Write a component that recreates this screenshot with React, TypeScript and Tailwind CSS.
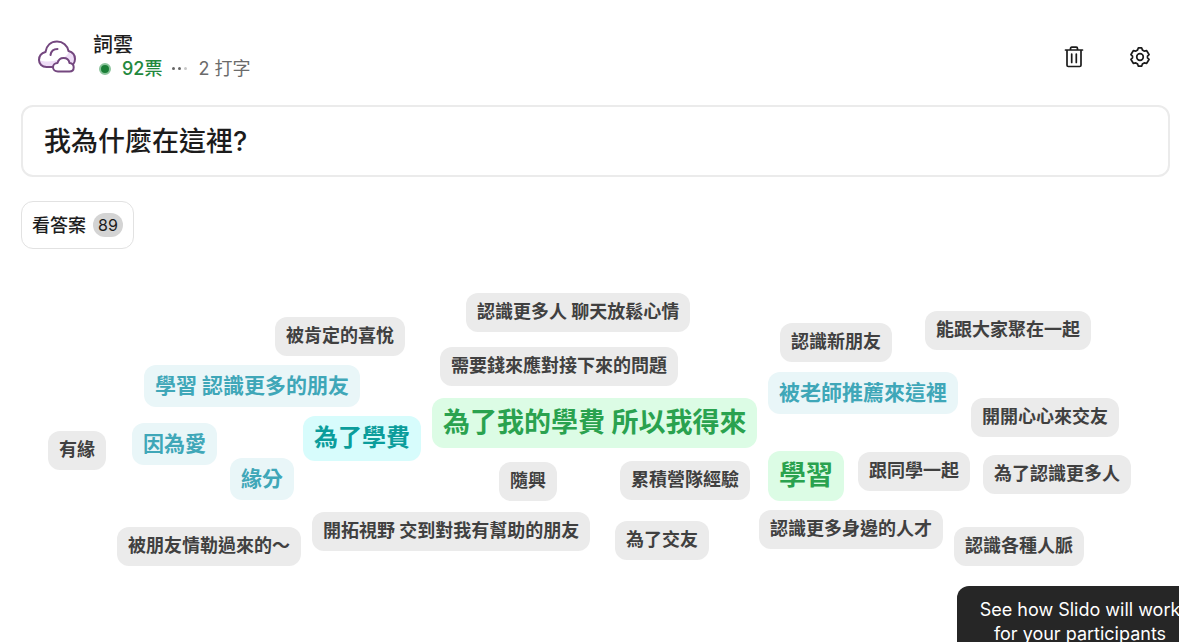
const FONT = "font-['Inter','Noto_Sans_CJK_TC',sans-serif]";

type Tone = "gray" | "sky" | "cyan" | "green";

const TONES: Record<Tone, string> = {
  gray: "bg-[#ebebeb] text-[#404040] text-[18px] leading-[38px] pb-px",
  sky: "bg-[#e9f6f8] text-[#3fa7b8] text-[21px] leading-[42px]",
  cyan: "bg-[#d7fcfc] text-[#0b9d9b] text-[24px] leading-[44px] pb-px",
  green: "bg-[#dcfce5] text-[#2aa24f] text-[27px] leading-[50px]",
};

const WORDS: { text: string; x: number; y: number; tone: Tone }[] = [
  { text: "認識更多人 聊天放鬆心情", x: 445, y: 20, tone: "gray" },
  { text: "能跟大家聚在一起", x: 904, y: 38, tone: "gray" },
  { text: "被肯定的喜悅", x: 254, y: 44, tone: "gray" },
  { text: "認識新朋友", x: 759, y: 50, tone: "gray" },
  { text: "需要錢來應對接下來的問題", x: 419, y: 74, tone: "gray" },
  { text: "學習 認識更多的朋友", x: 123, y: 92, tone: "sky" },
  { text: "被老師推薦來這裡", x: 747, y: 99, tone: "sky" },
  { text: "為了我的學費 所以我得來", x: 411, y: 125, tone: "green" },
  { text: "開開心心來交友", x: 950, y: 125, tone: "gray" },
  { text: "為了學費", x: 282, y: 143, tone: "cyan" },
  { text: "因為愛", x: 111, y: 150, tone: "sky" },
  { text: "有緣", x: 27, y: 158, tone: "gray" },
  { text: "學習", x: 747, y: 178, tone: "green" },
  { text: "跟同學一起", x: 837, y: 179, tone: "gray" },
  { text: "為了認識更多人", x: 962, y: 182, tone: "gray" },
  { text: "緣分", x: 209, y: 185, tone: "sky" },
  { text: "累積營隊經驗", x: 599, y: 188, tone: "gray" },
  { text: "隨興", x: 478, y: 189, tone: "gray" },
  { text: "認識更多身邊的人才", x: 738, y: 237, tone: "gray" },
  { text: "開拓視野 交到對我有幫助的朋友", x: 291, y: 239, tone: "gray" },
  { text: "為了交友", x: 594, y: 248, tone: "gray" },
  { text: "被朋友情勒過來的～", x: 96, y: 254, tone: "gray" },
  { text: "認識各種人脈", x: 933, y: 254, tone: "gray" },
];

function CloudIcon() {
  return (
    <svg width="40" height="34" viewBox="0 0 40 34" fill="none" stroke="#74477f" strokeWidth="2" strokeLinecap="round" strokeLinejoin="round" aria-hidden="true">
      <path d="M2 20c6 3 25 2 30-8 4 1 6 4 6 8 0 3-1 5-2 6L16 27H9c-4 0-7-4-7-7Z" fill="#eedcf6" stroke="none" />
      <path d="M15.500 27H9.500C5 27 2 24 2 20c0-4 2.500-7 6.500-8C9.500 5.500 14 1.500 20 1.500c6 0 10.500 4 11.500 9.500 4 1 6.500 4 6.500 8 0 2-.8 4.200-2 5.500" />
      <path d="M13.500 15c.5-3.500 3-6 7-6" />
      <path d="M21 31.500c-3 0-5-1.800-5-4.200s2-4.300 4.500-4.300c.8-3 3-5 6-5 3.200 0 5.500 2.200 6 5 2.500.3 4.200 2 4.200 4.300 0 2.400-1.700 4.200-4.200 4.200Z" fill="#fff" />
    </svg>
  );
}

function TrashIcon() {
  return (
    <svg width="24" height="24" viewBox="0 0 24 24" fill="none" stroke="#1c1c1c" strokeWidth="1.700" strokeLinecap="round" strokeLinejoin="round" aria-hidden="true">
      <path d="M3.500 5h17M8.500 4.800V3.500c0-.8.500-1.300 1.300-1.300h4.400c.8 0 1.300.5 1.300 1.300v1.300M5 5v15.200c0 .8.500 1.300 1.300 1.300h11.400c.8 0 1.300-.5 1.300-1.300V5M9.700 9v8.500M14.300 9v8.500" />
    </svg>
  );
}

function GearIcon() {
  return (
    <svg width="24" height="24" viewBox="0 0 24 24" fill="none" stroke="#1c1c1c" strokeWidth="1.700" strokeLinejoin="round" aria-hidden="true">
      <path d="M10.400 2.800h3.200l.9 2.300c.6.200 1.200.6 1.700 1l2.500-.4 1.700 2.800 .7 1.200-1.600 1.400v1.800l1.600 1.400-.7 1.200-1.700 2.800-2.500-.4c-.5.400-1.100.8-1.700 1l-.9 2.300h-3.200l-.9-2.300c-.6-.2-1.200-.6-1.700-1l-2.500.4-1.700-2.800-.7-1.200 1.600-1.400v-1.800L2.900 9.700l.7-1.200 1.700-2.800 2.500.4c.5-.4 1.100-.8 1.700-1Z" />
      <circle cx="12" cy="12" r="3.300" />
    </svg>
  );
}

export default function App() {
  return (
    <div className={`relative min-h-screen overflow-hidden bg-white text-[#1c1c1c] ${FONT}`}>
      <main lang="zh-Hant" className="pt-8 pr-[9px] pl-[21px]">
        <header className="flex h-[49px] items-center justify-between pr-[18px] pl-4">
          <div className="flex items-center gap-4">
            <CloudIcon />
            <div>
              <h1 className="text-[20px] leading-6 font-medium">詞雲</h1>
              <p className="flex items-center text-[18px] leading-6">
                <span className="ml-[6px] size-3 rounded-full border-2 border-[#8cc49c] bg-[#1b7f37]" />
                <span className="ml-[11px] font-medium text-[#23883d]">92票</span>
                <span className="ml-[10px] flex gap-[3px]">
                  <span className="size-[3px] rounded-full bg-[#666]" />
                  <span className="size-[3px] rounded-full bg-[#666]" />
                  <span className="size-[3px] rounded-full bg-[#c8c8c8]" />
                </span>
                <span className="ml-[11px] text-[#6b6b6b]">2 打字</span>
              </p>
            </div>
          </div>
          <div className="flex gap-[42px]">
            <button type="button" aria-label="刪除">
              <TrashIcon />
            </button>
            <button type="button" aria-label="設定">
              <GearIcon />
            </button>
          </div>
        </header>

        <input
          type="text"
          aria-label="問題"
          defaultValue="我為什麼在這裡?"
          className="mt-6 block h-[72px] w-full rounded-xl border-2 border-[#ebebeb] bg-white px-[21px] pb-1 text-[27px] font-medium outline-none"
        />

        <button type="button" className="mt-6 flex h-12 items-center gap-[7px] rounded-xl border border-[#e2e2e2] px-[10px] text-[18px] font-medium">
          看答案
          <span className="flex h-6 w-[30px] items-center justify-center rounded-full bg-[#d4d4d4] text-[16px] font-normal">89</span>
        </button>

        <ul className="relative mt-6 h-[320px]">
          {WORDS.map((word) => (
            <li
              key={word.text}
              className={`absolute rounded-xl px-[11px] font-bold whitespace-nowrap ${TONES[word.tone]}`}
              style={{ left: word.x, top: word.y }}
            >
              {word.text}
            </li>
          ))}
        </ul>
      </main>

      <div role="tooltip" className="absolute -right-6 -bottom-4 w-[246px] rounded-xl bg-[#262626] px-5 py-3 text-center text-[18px] leading-6 text-white">
        See how Slido will work for your participants
      </div>
    </div>
  );
}
